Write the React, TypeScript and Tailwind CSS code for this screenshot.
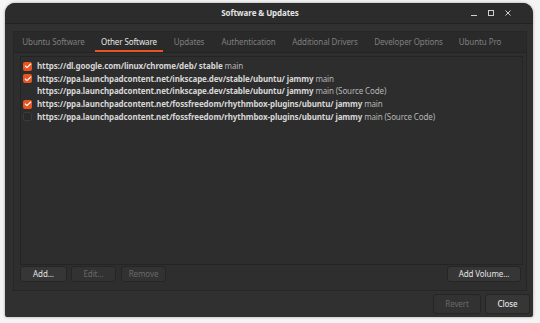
import { Check } from 'lucide-react'

const TABS = [
  { label: 'Ubuntu Software', w: 'w-[79px]' },
  { label: 'Other Software', w: 'w-[72px]' },
  { label: 'Updates', w: 'w-[48px]' },
  { label: 'Authentication', w: 'w-[71px]' },
  { label: 'Additional Drivers', w: 'w-[82px]' },
  { label: 'Developer Options', w: 'w-[85px]' },
  { label: 'Ubuntu Pro', w: 'w-[58px]' },
]

const SOURCES = [
  { on: true, url: 'https://dl.google.com/linux/chrome/deb/ stable', rest: ' main' },
  { on: true, url: 'https://ppa.launchpadcontent.net/inkscape.dev/stable/ubuntu/ jammy', rest: ' main' },
  { on: false, hidden: true, url: 'https://ppa.launchpadcontent.net/inkscape.dev/stable/ubuntu/ jammy', rest: ' main (Source Code)' },
  { on: true, url: 'https://ppa.launchpadcontent.net/fossfreedom/rhythmbox-plugins/ubuntu/ jammy', rest: ' main' },
  { on: false, url: 'https://ppa.launchpadcontent.net/fossfreedom/rhythmbox-plugins/ubuntu/ jammy', rest: ' main (Source Code)' },
]

function Btn({ label, disabled, className = '' }: { label: string; disabled?: boolean; className?: string }) {
  return (
    <div
      className={`flex items-center justify-center rounded-[3px] border border-[#252525] text-[8px] tracking-[-0.1px] whitespace-nowrap ${
        disabled ? 'text-[#696969] bg-[#323232]' : 'text-[#e2e2e2] bg-[#363636]'
      } ${className}`}
    >
      {label}
    </div>
  )
}

export default function App() {
  return (
    <div className="w-[540px] h-[323px] bg-[#f4f4f4] pt-[3px] pl-[5px]" style={{ fontFamily: '"Noto Sans", sans-serif' }}>
      <div className="w-[528px] h-[314px] bg-[#303030] rounded-t-[10px] rounded-b-[2px] flex flex-col overflow-hidden shadow-[0_0_3px_rgba(0,0,0,0.35)]">
        {/* title bar */}
        <div className="h-[21px] relative flex items-center justify-center pr-[18px] bg-[#2c2c2c] border-b border-[#222]">
          <span className="text-[8px] font-bold tracking-[-0.1px] text-[#e4e4e4]">Software &amp; Updates</span>
          <div className="absolute right-[21px] top-0 h-full flex items-center gap-[9px] text-[#cfcfcf]">
            <svg width="8" height="8" viewBox="0 0 8 8"><path d="M1 6.5h6" stroke="currentColor" strokeWidth="1" /></svg>
            <svg width="8" height="8" viewBox="0 0 8 8"><rect x="1.5" y="1.5" width="5" height="5" fill="none" stroke="currentColor" strokeWidth="1" /></svg>
            <svg width="8" height="8" viewBox="0 0 8 8"><path d="M1.5 1.5l5 5M6.5 1.5l-5 5" stroke="currentColor" strokeWidth="1" /></svg>
          </div>
        </div>

        {/* body */}
        <div className="flex-1 flex flex-col pl-[8px] pr-[6px] pt-[7px]">
          <div className="h-[260px] flex flex-col border border-[#262626] bg-[#2e2e2e]">
            {/* tabs */}
            <div className="h-[21px] flex items-stretch bg-[#2a2a2a] border-b border-[#242424]">
              {TABS.map((t, i) => (
                <div key={t.label} className={`relative flex items-center justify-center ${t.w}`}>
                  <span className={`text-[8px] tracking-[-0.1px] whitespace-nowrap ${i === 1 ? 'text-[#e6e6e6]' : 'text-[#7f7f7f]'}`}>
                    {t.label}
                  </span>
                  {i === 1 && <div className="absolute left-[2px] right-[2px] bottom-0 h-[2px] bg-[#e95420]" />}
                </div>
              ))}
            </div>

            {/* content */}
            <div className="flex-1 flex flex-col pl-[6px] pr-[3px] pt-[3px] pb-[8px]">
              <div className="h-[209px] border border-[#242424] bg-[#2d2d2d] pt-[3px] pl-[2px]">
                {SOURCES.map((s, i) => (
                  <div key={i} className="h-[12.6px] flex items-center gap-[5px]">
                    <div
                      className={`w-[9px] h-[9px] rounded-[2px] flex items-center justify-center ${
                        s.on ? 'bg-[#e95420]' : s.hidden ? '' : 'bg-[#2a2a2a] border border-[#3a3a3a]'
                      }`}
                    >
                      {s.on && <Check size={8} strokeWidth={3.5} color="#fff" />}
                    </div>
                    <span className="text-[8px] tracking-[-0.12px] whitespace-nowrap text-[#d6d6d6]">
                      <span className="font-bold">{s.url}</span>
                      <span className="text-[#b5b5b5]">{s.rest}</span>
                    </span>
                  </div>
                ))}
              </div>
              <div className="flex mt-[1px] h-[16px] items-stretch">
                <Btn label="Add..." className="w-[47px]" />
                <Btn label="Edit..." disabled className="w-[45px] ml-[4px]" />
                <Btn label="Remove" disabled className="w-[45px] ml-[5px]" />
                <div className="flex-1" />
                <Btn label="Add Volume..." className="w-[74px] mr-[2px]" />
              </div>
            </div>
          </div>

          {/* dialog actions */}
          <div className="flex-1 flex justify-end items-center pb-[1px]">
            <Btn label="Revert" disabled className="w-[48px] h-[20px]" />
            <Btn label="Close" className="w-[45px] h-[20px] ml-[4px] mr-[-3px] font-medium" />
          </div>
        </div>
      </div>
    </div>
  )
}
